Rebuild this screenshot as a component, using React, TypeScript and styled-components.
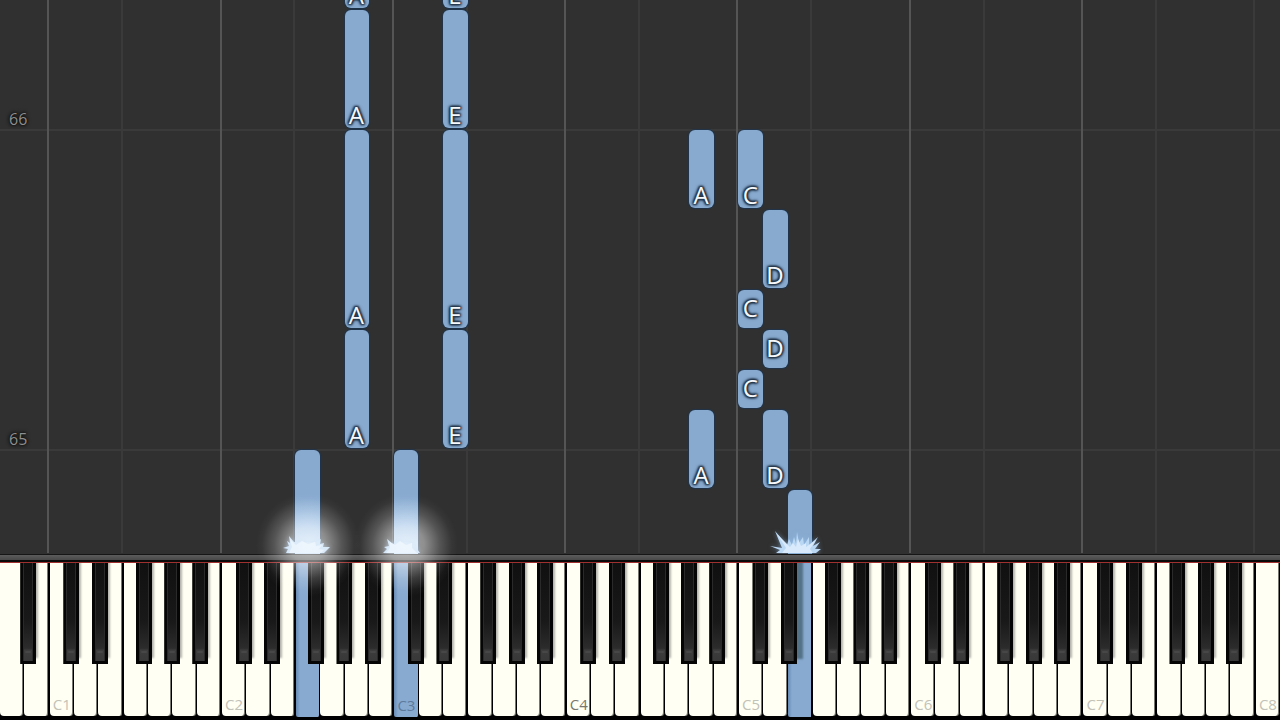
import React from 'react';
import styled, { createGlobalStyle, css } from 'styled-components';

const WHITE_COUNT = 52;
const STEP_COUNT = 14;
const NAMES = ['A', 'B', 'C', 'D', 'E', 'F', 'G'];
const column = (n: number) => `${(n * 100) / WHITE_COUNT}%`;

const GlobalStyle = createGlobalStyle`
  * { box-sizing: border-box; }
  body { margin: 0; background: #000; font-family: 'Open Sans', 'Noto Sans', sans-serif; }
`;

const Stage = styled.main`
  display: flex;
  flex-direction: column;
  height: 100vh;
  overflow: hidden;
`;

/* One column per white key, one row per eighth; the last row is the one being played. */
const Roll = styled.section`
  flex: 1;
  min-height: 0;
  display: grid;
  grid-template-columns: repeat(${WHITE_COUNT}, minmax(0, 1fr));
  grid-template-rows: repeat(${STEP_COUNT}, 40px) 65px;
  align-content: end;
  overflow: hidden;
  background: #303030;
`;

const PitchLine = styled.div<{ $lane: number; $strong: boolean }>`
  grid-column: ${p => p.$lane + 1};
  grid-row: 1 / -1;
  margin: 0 0 1px -2px;
  border-left: 2px solid ${p => (p.$strong ? '#555' : '#3a3a3a')};
`;

/* Rows are counted upwards from the keyboard. */
const Measure = styled.div<{ $step: number }>`
  grid-column: 1 / -1;
  grid-row: ${p => STEP_COUNT + 1 - p.$step};
  display: flex;
  align-items: flex-end;
  margin-bottom: -2px;
  padding-left: 9px;
  border-bottom: 2px solid #3a3a3a;
  color: #8e8e8e;
  font-size: 16px;
  line-height: 20px;
  text-shadow: 0 0 2px #111, 0 0 3px #111, 0 0 4px #111;
`;

const Note = styled.div<{ $lane: number; $step: number; $span: number; $lit: boolean }>`
  grid-column: ${p => p.$lane + 1};
  grid-row: ${p => STEP_COUNT + 2 - p.$step - p.$span} / span ${p => p.$span};
  display: flex;
  justify-content: center;
  align-items: ${p => (p.$span === 1 ? 'center' : 'flex-end')};
  margin: 1px 0;
  padding: 0 1px 2px 0;
  border-radius: 6px;
  background: #88aacf;
  box-shadow: 0 0 1px 1px #20354c;
  color: #f6f9fc;
  font-size: 24px;
  line-height: 22px;
  text-shadow: 0 0 2px #26384c, 1px 1px 2px #26384c, -1px -1px 2px #26384c,
    1px -1px 2px #26384c, -1px 1px 2px #26384c, 0 0 3px #26384c, 0 0 4px #26384c;
  ${p =>
    p.$step === 0 &&
    css`
      margin-bottom: 0;
      border-radius: 6px 6px 0 0;
    `}
  ${p =>
    p.$lit &&
    css`
      background: linear-gradient(#88aacf 45%, #a4c5e8 72%, #d4e7fa);
    `}
`;

const Rail = styled.div`
  flex: none;
  height: 8px;
  border-top: 1px solid #161616;
  border-bottom: 2px solid #0a0a0a;
  background: linear-gradient(#5c5c5c, #484848);
`;

const Keyboard = styled.section`
  position: relative;
  flex: none;
  display: flex;
  height: 158px;
  padding-bottom: 4px;
  border-top: 1px solid #a03030;
  background: #000;
`;

const keyReset = css`
  appearance: none;
  border: 0;
  padding: 0;
  margin: 0;
  font: inherit;
`;

const WhiteKey = styled.button<{ $down: boolean; $edge: boolean; $middle: boolean }>`
  ${keyReset}
  flex: 1 1 0;
  min-width: 0;
  display: flex;
  align-items: flex-end;
  justify-content: center;
  padding: 0 0 2px 1px;
  border-right: ${p => (p.$edge ? 2 : 1)}px solid #000;
  border-radius: 0 0 4px 4px;
  background: #fffff3;
  box-shadow: inset -1px 0 #77776f;
  color: ${p => (p.$middle ? '#77776f' : '#c2c2b8')};
  font-size: 15px;
  line-height: 20px;
  ${p =>
    p.$down &&
    css`
      height: 154px;
      border-radius: 0 0 2px 2px;
      background: linear-gradient(90deg, #668bb5, #88aad0 4px);
      box-shadow: none;
      color: #5d7a9c;
    `}
`;

const BlackKey = styled.button<{ $at: number; $cast: boolean }>`
  ${keyReset}
  position: absolute;
  top: 0;
  left: ${p => column(p.$at)};
  width: 16px;
  height: 101px;
  background: #050505;
  clip-path: inset(0 -12px -4px 0);
  box-shadow: ${p =>
    p.$cast ? '7px -4px 2px -1px #547287' : '3px -5px 2px -1px #b4b3ac'};
  &::before {
    content: '';
    position: absolute;
    inset: 0 3px 3px 3px;
    border: solid #2a2a2a;
    border-width: 0 1px;
    background: linear-gradient(#101010, #191919 60%, #2c2c2c 87%, #3c3c3c 89%, #383838);
  }
  &::after {
    content: '';
    position: absolute;
    left: 5px;
    right: 5px;
    bottom: 11px;
    height: 2px;
    border-radius: 1px;
    background: #474747;
  }
`;

const Glow = styled.div<{ $at: number }>`
  position: absolute;
  z-index: 3;
  top: -70px;
  left: ${p => column(p.$at)};
  width: 104px;
  height: 104px;
  margin-left: -52px;
  pointer-events: none;
  background: radial-gradient(
    circle closest-side,
    rgba(255, 255, 255, 0.56),
    rgba(255, 255, 255, 0.46) 35%,
    rgba(255, 255, 255, 0.18) 65%,
    rgba(255, 255, 255, 0.03) 88%,
    transparent
  );
`;

const Spark = styled.svg<{ $lane: number }>`
  grid-column: ${p => p.$lane + 1};
  grid-row: -2;
  align-self: end;
  justify-self: center;
  width: 56px;
  height: 28px;
  margin: 0 4px 1px 0;
  filter: drop-shadow(0 0 2px rgba(150, 195, 240, 0.6));
`;

const notes: { lane: number; step: number; span: number; lit?: boolean }[] = [
  { lane: 14, step: 13, span: 2 },
  { lane: 14, step: 10, span: 3 },
  { lane: 14, step: 5, span: 5 },
  { lane: 14, step: 2, span: 3 },
  { lane: 18, step: 13, span: 2 },
  { lane: 18, step: 10, span: 3 },
  { lane: 18, step: 5, span: 5 },
  { lane: 18, step: 2, span: 3 },
  { lane: 28, step: 8, span: 2 },
  { lane: 30, step: 8, span: 2 },
  { lane: 31, step: 6, span: 2 },
  { lane: 30, step: 5, span: 1 },
  { lane: 31, step: 4, span: 1 },
  { lane: 30, step: 3, span: 1 },
  { lane: 28, step: 1, span: 2 },
  { lane: 31, step: 1, span: 2 },
  { lane: 12, step: 0, span: 2, lit: true },
  { lane: 16, step: 0, span: 2, lit: true },
  { lane: 32, step: 0, span: 1 },
];

const pressed = [12, 16, 32];
const glowing = [12.5, 16.5];

const octaves = [0, 1, 2, 3, 4, 5, 6];
const offsets: [string, number][] = [
  ['C#', 0.57],
  ['D#', 1.73],
  ['F#', 3.51],
  ['G#', 4.67],
  ['A#', 5.81],
];
const blacks = [
  { name: 'A#0', at: 0.82 },
  ...octaves.flatMap(o => offsets.map(([n, d]) => ({ name: `${n}${o + 1}`, at: 2 + o * 7 + d }))),
];

const whites = Array.from({ length: WHITE_COUNT }, (_, i) => ({
  name: `${NAMES[i % 7]}${Math.floor((i + 5) / 7)}`,
  letter: NAMES[i % 7],
  index: i,
}));

const bursts = [
  {
    lane: 12,
    outer: 'M8 28 L10 24 L5 23 L11 21 L9 16 L12 18 L11 11 L16 17 L38 17 L43 14 L42 19 L46 18 L45 22 L52 22 L46 28Z',
    inner: 'M11 28 L14 22 L12 14 L18 20 L24 16 L30 19 L37 17 L38 21 L44 20 L41 24 L46 25 L43 28Z',
  },
  {
    lane: 16,
    outer: 'M7 28 L11 24 L8 22 L13 21 L11 14 L17 19 L22 16 L38 18 L39 21 L44 28Z',
    inner: 'M10 28 L14 23 L14 17 L19 20 L24 16 L30 20 L36 18 L36 23 L41 28Z',
  },
  {
    lane: 32,
    outer:
      'M6 28 L10 25 L0 21 L12 23 L5 6 L17 20 L19 14 L22 20 L24 12 L26 19 L27 7 L29 18 L33 12 L34 20 L39 12 L39 20 L48 12 L43 21 L50 17 L45 24 L51 24 L46 28Z',
    inner: 'M12 28 L16 23 L7 9 L20 22 L23 18 L26 22 L28 14 L31 21 L36 18 L36 22 L46 15 L40 24 L43 28Z',
  },
];

export default function App() {
  return (
    <Stage>
      <GlobalStyle />
      <Roll aria-label="Falling notes">
        <Measure $step={10}>66</Measure>
        <Measure $step={2}>65</Measure>
        {whites
          .filter(k => k.letter === 'C' || k.letter === 'F')
          .map(k => (
            <PitchLine key={k.name} $lane={k.index} $strong={k.letter === 'C' && k.index < 51} />
          ))}
        {notes.map(n => (
          <Note
            key={`${n.lane}-${n.step}`}
            $lane={n.lane}
            $step={n.step}
            $span={n.span}
            $lit={Boolean(n.lit)}
          >
            {n.step > 0 && NAMES[n.lane % 7]}
          </Note>
        ))}
        {bursts.map(b => (
          <Spark key={b.lane} $lane={b.lane} viewBox="0 0 56 28" aria-hidden="true">
            <path fill="#bad7f3" d={b.outer} />
            <path fill="#d8eafb" d={b.inner} />
          </Spark>
        ))}
      </Roll>
      <Rail />
      <Keyboard aria-label="Piano keyboard">
        {whites.map(k => (
          <WhiteKey
            key={k.name}
            type="button"
            aria-label={k.name}
            $down={pressed.includes(k.index)}
            $edge={k.letter === 'B' || k.letter === 'E'}
            $middle={k.name === 'C4'}
          >
            {k.letter === 'C' && k.name}
          </WhiteKey>
        ))}
        {blacks.map(k => (
          <BlackKey key={k.name} type="button" aria-label={k.name} $at={k.at} $cast={k.name === 'D#5'} />
        ))}
        {glowing.map(g => (
          <Glow key={g} $at={g} />
        ))}
      </Keyboard>
    </Stage>
  );
}
